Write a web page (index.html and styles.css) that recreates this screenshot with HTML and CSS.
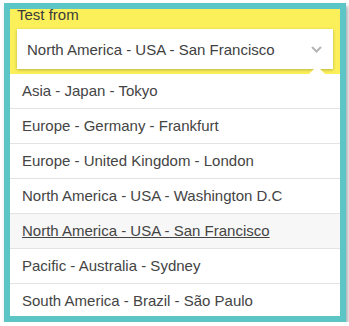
FILE: index.html
```html
<!DOCTYPE html>
<html lang="en">
<head>
    <meta charset="UTF-8">
    <meta name="viewport" content="width=device-width, initial-scale=1.0">
    <title>Test from</title>
    <link rel="stylesheet" href="styles.css">
</head>
<body>
    <div class="frame">
        <div class="picker">
            <div class="label">Test from</div>
            <div class="select">
                <span class="select-value">North America - USA - San Francisco</span>
                <svg class="chevron" width="11" height="7" viewBox="0 0 11 7">
                    <path d="M1 1 L5.5 5.5 L10 1" fill="none" stroke="#b4b4b4" stroke-width="2"/>
                </svg>
            </div>
        </div>
        <div class="dropdown">
            <span class="caret"></span>
            <ul class="options">
                <li class="option">Asia - Japan - Tokyo</li>
                <li class="option">Europe - Germany - Frankfurt</li>
                <li class="option">Europe - United Kingdom - London</li>
                <li class="option">North America - USA - Washington D.C</li>
                <li class="option selected">North America - USA - San Francisco</li>
                <li class="option">Pacific - Australia - Sydney</li>
                <li class="option">South America - Brazil - São Paulo</li>
            </ul>
        </div>
    </div>
</body>
</html>
```

FILE: styles.css
```css
body {
    font-family: 'Liberation Sans', Arial, sans-serif;
    background-color: #ffffff;
    color: #444444;
    margin: 0;
    padding: 0;
}

.frame {
    width: 330px;
    height: 307px;
    margin: 3px 0 0 4px;
    border: 6px solid #5cc6c6;
    box-shadow: 2px 3px 4px rgba(0,0,0,0.35);
    overflow: hidden;
    background-color: #ffffff;
}

.picker {
    background-color: #fbf05a;
    padding: 0 7px 5px;
    overflow: hidden;
}

.label {
    font-size: 15px;
    line-height: 15px;
    margin-top: -2px;
    color: #3a3a3a;
}

.select {
    display: flex;
    align-items: center;
    justify-content: space-between;
    height: 40px;
    margin-top: 7px;
    padding: 0 11px 0 10px;
    background-color: #ffffff;
    box-shadow: 0 1px 3px rgba(0,0,0,0.25);
    font-size: 15px;
    color: #3f3f3f;
}

.chevron {
    display: block;
}

.dropdown {
    position: relative;
    height: 242px;
}

.caret {
    position: absolute;
    top: -8px;
    right: 14px;
    width: 0;
    height: 0;
    border-left: 9px solid transparent;
    border-right: 9px solid transparent;
    border-bottom: 9px solid #ffffff;
}

.options {
    list-style: none;
    margin: 0;
    padding: 0;
}

.option {
    height: 34px;
    line-height: 34px;
    padding-left: 12px;
    border-bottom: 1px solid #e3e3e3;
    font-size: 15px;
    color: #444444;
}

.option.selected {
    background-color: #f7f7f7;
    text-decoration: underline;
}
```
